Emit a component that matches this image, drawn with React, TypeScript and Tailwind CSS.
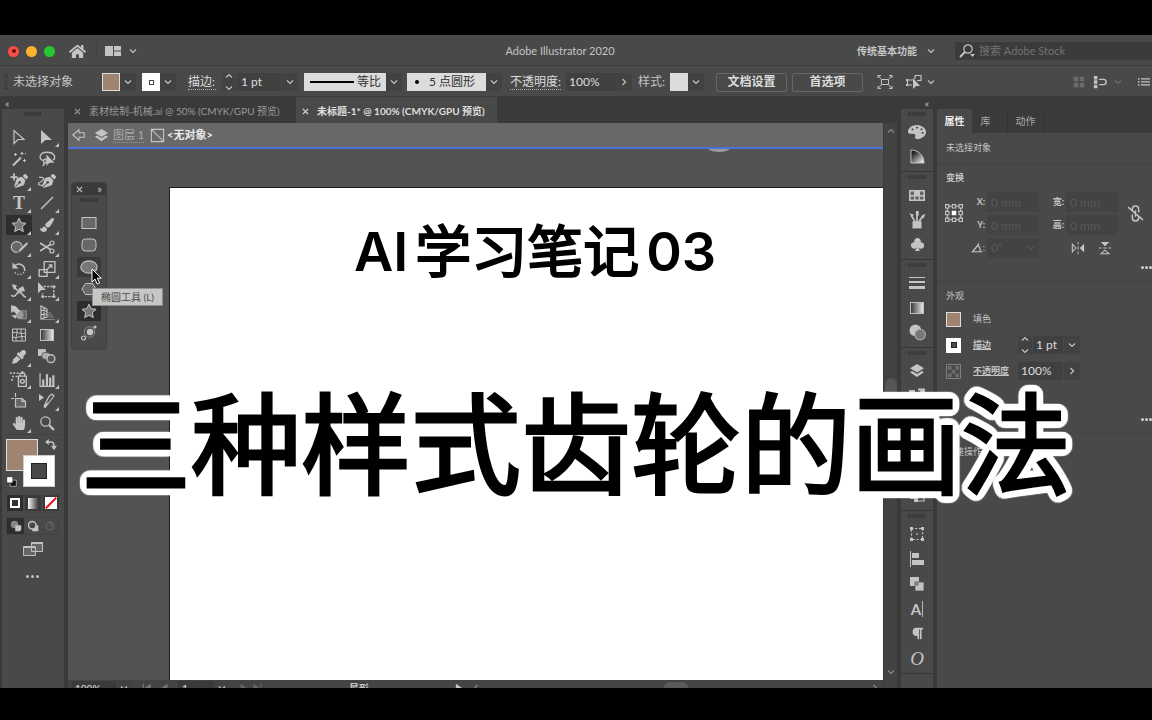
import { useState } from "react";
import type { ReactNode } from "react";
import clsx from "clsx";
import { FaEyeDropper, FaHandPaper, FaHome, FaPaintBrush, FaPalette, FaParagraph, FaPenNib } from "react-icons/fa";
import { BsSuitClubFill } from "react-icons/bs";

const line = { fill: "none", stroke: "currentColor", strokeWidth: 1.2 };
const starPath = "M8 1.2l2.1 4.5 4.9.6-3.6 3.4.9 4.9L8 12.2l-4.3 2.4.9-4.9L1 6.3l4.9-.6z";

type IconProps = { children: ReactNode; className?: string };

const Icon = ({ children, className = "size-4" }: IconProps) => (
  <svg viewBox="0 0 16 16" fill="currentColor" className={clsx("shrink-0", className)} aria-hidden="true">
    {children}
  </svg>
);

const Chevron = ({ className = "size-2" }: { className?: string }) => (
  <Icon className={className}>
    <path d="M2 5l6 6 6-6" fill="none" stroke="currentColor" strokeWidth="2.4" />
  </Icon>
);

const Cross = () => (
  <Icon className="size-[7px]">
    <path d="M2 2l12 12M14 2L2 14" fill="none" stroke="currentColor" strokeWidth="2.6" />
  </Icon>
);

const Gradient = ({ id }: { id: string }) => (
  <>
    <defs>
      <linearGradient id={id}>
        <stop offset="0" stopColor="#333" />
        <stop offset="1" stopColor="#eee" />
      </linearGradient>
    </defs>
    <rect x="1.5" y="2.5" width="13" height="11" fill={`url(#${id})`} stroke="#c0c0c0" />
  </>
);

const Layers = () => (
  <>
    <path d="M8 1l7 4.3-7 4.3-7-4.3z" />
    <path d="M1 9.2l2.2-1.1L8 11l4.8-2.9L15 9.2l-7 4.9z" />
  </>
);

type Tool = { name: string; icon: ReactNode; more?: boolean };

const tools: Tool[] = [
  { name: "选择", icon: <Icon><path d="M3 1.5v13l4-4h6z" {...line} /></Icon> },
  { name: "直接选择", more: true, icon: <Icon><path d="M2 1v14l4.4-4H13z" /></Icon> },
  {
    name: "魔棒",
    icon: (
      <Icon>
        <path d="M2 14.5l8-8" {...line} strokeWidth="2" />
        <path d="M11 1v3M9.5 2.5h3M4.5 2v3M3 3.5h3M13.5 8v3M12 9.5h3M14 3l1-1" {...line} strokeWidth="1" />
      </Icon>
    ),
  },
  {
    name: "套索",
    icon: (
      <Icon className="size-[18px]">
        <path d="M5 9.5C0 8.5 1 2 8 2s8 5 5.5 7M5 9.5c0-2 3-2 2.500.5s-3 2-2.500 0zM5 11.5c1 1.5 0 2.500-1 2.500" {...line} />
        <path d="M7.5 4v10l2.700-2.700h4.300z" />
      </Icon>
    ),
  },
  {
    name: "钢笔",
    more: true,
    icon: (
      <span className="flex items-center">
        <Icon className="size-2 -mt-2 -mr-1"><path d="M8 1v14M1 8h14" {...line} strokeWidth="3.5" /></Icon>
        <FaPenNib className="size-[14px]" />
      </span>
    ),
  },
  {
    name: "曲率",
    icon: (
      <span className="flex items-center">
        <Icon className="h-4 w-2 -mr-1"><path d="M2 0c12 0 11 6 3 10-8 3-4 8 6 6" {...line} strokeWidth="2.5" /></Icon>
        <FaPenNib className="size-[14px]" />
      </span>
    ),
  },
  { name: "文字", more: true, icon: <Icon><text x="8" y="14" textAnchor="middle" fontSize="18" fontWeight="700" fontFamily="Liberation Serif, serif">T</text></Icon> },
  { name: "直线段", more: true, icon: <Icon><path d="M2 14L14 2" {...line} strokeWidth="1.5" /></Icon> },
  { name: "星形", more: true, icon: <Icon><path d={starPath} fill="#777" stroke="currentColor" /></Icon> },
  { name: "画笔", more: true, icon: <FaPaintBrush className="size-[14px]" /> },
  {
    name: "Shaper",
    more: true,
    icon: (
      <Icon className="size-[18px]">
        <circle cx="6" cy="8" r="4.8" fill="#666" stroke="currentColor" />
        <path d="M15.5 3L8.500 9.500 6.500 13l3.500-1.500L16 5.500z" stroke="#494949" strokeWidth=".5" />
      </Icon>
    ),
  },
  {
    name: "剪刀",
    more: true,
    icon: (
      <Icon>
        <circle cx="13" cy="4" r="2" {...line} />
        <circle cx="13" cy="12" r="2" {...line} />
        <path d="M11.5 5.5L1 12M11.5 10.5L1 4" {...line} strokeWidth="1.5" />
      </Icon>
    ),
  },
  {
    name: "旋转",
    more: true,
    icon: (
      <Icon>
        <path d="M4 4.5A5.800 5.800 0 0 1 13.5 10" {...line} strokeWidth="1.5" />
        <path d="M13 11a5.800 5.800 0 0 1-10-1" {...line} strokeDasharray="1.5 1.5" />
        <path d="M1.500 1.500v6h6z" />
      </Icon>
    ),
  },
  {
    name: "比例缩放",
    more: true,
    icon: <Icon className="size-[18px]"><path d="M5.5 1.5h9.500v9.500H5.500zM1 8.5h7v6H1zM8 8.5l4-4M9.5 4.300h2.700V7" {...line} /></Icon>,
  },
  {
    name: "宽度",
    more: true,
    icon: (
      <Icon>
        <path d="M0 12c4 4 5-2 8-3s3 5 7 5M2 3l7 7" {...line} strokeWidth="1.5" />
        <path d="M1 1l5 1.5L4.5 5 3 7zM7 6l5-3 2 5-5 1z" />
      </Icon>
    ),
  },
  {
    name: "自由变换",
    more: true,
    icon: (
      <Icon className="size-[18px]">
        <path d="M5 4h9v9H4v-3" {...line} strokeDasharray="2 1" />
        <path d="M0 0v10l3-3h4zM13 3h2.500v2H13zM13 12h2.500v2H13zM3 12h2.500v2H3z" />
      </Icon>
    ),
  },
  {
    name: "形状生成器",
    more: true,
    icon: (
      <Icon className="size-[18px]">
        <path d="M8.500 6h6v7h-7" fill="#666" stroke="#888" />
        <circle cx="8.500" cy="9.500" r="3.500" fill="#999" />
        <path d="M1 1v7l2-1.500L6 9l3-3-4-4zM1 10h5l-1 3z" />
      </Icon>
    ),
  },
  {
    name: "透视网格",
    more: true,
    icon: (
      <Icon>
        <path d="M2 1v13l6-2V4zM2 5l6 1.5M2 9.5l6-.5M5 2.500V13" {...line} />
        <path d="M8 12h7M8 10h5.500M8 8h4M2 14.500h14" {...line} stroke="#888" />
      </Icon>
    ),
  },
  {
    name: "网格",
    icon: <Icon><path d="M1.5 2h13v12h-13zM1.5 6c4-2 8 2 13 0M1.5 10c4 2 8-2 13 0M5.5 2c2 4-2 8 0 12M10.500 2c-2 4 2 8 0 12" {...line} strokeWidth="1" /></Icon>,
  },
  { name: "渐变", icon: <Icon><Gradient id="tool-gradient" /></Icon> },
  { name: "吸管", more: true, icon: <FaEyeDropper className="size-[14px]" /> },
  {
    name: "混合",
    icon: (
      <Icon className="size-[18px]">
        <path d="M0 1h7v6H0z" />
        <rect x="3.5" y="4" width="7" height="6" rx="2" fill="#aaa" stroke="#494949" strokeWidth=".6" />
        <circle cx="11.5" cy="9.500" r="3.500" fill="#555" stroke="currentColor" strokeWidth="1.2" />
      </Icon>
    ),
  },
  {
    name: "符号喷枪",
    more: true,
    icon: (
      <Icon className="size-[18px]">
        <path d="M7.5 5.5h7v9h-7zM9 3h4v2.500H9z" {...line} />
        <circle cx="11" cy="10" r="1.7" {...line} />
        <path d="M10 1h2v2h-2zM0 2h1.500v1.500H0zM3 2h1.500v1.500H3zM6 2h1.500v1.500H6zM2 5h1.500v1.500H2zM5 5h1.500v1.500H5zM1 8h1.500v1.500H1z" />
      </Icon>
    ),
  },
  { name: "柱形图", more: true, icon: <Icon className="size-[17px]"><path d="M1 2v12.500h14" {...line} /><path d="M3 8h2v6H3zM6.5 3h2v11h-2zM9.5 6h2v8h-2zM12.5 4h2v10h-2z" /></Icon> },
  { name: "画板", icon: <Icon><path d="M4.5 5.5H11l3.500 3V14h-10z" fill="#666" stroke="currentColor" strokeWidth="1.2" /><path d="M4.5 0v4M0 5.5h3M11 5.5v3h3.500" {...line} /></Icon> },
  { name: "切片", more: true, icon: <Icon><path d="M15 3L6 14.500l-1-1 5-10L13 1zM5 14l4-4" {...line} /><path d="M0 1v7l5-3.500z" /></Icon> },
  { name: "抓手", more: true, icon: <FaHandPaper className="size-[14px]" /> },
  { name: "缩放", icon: <Icon><circle cx="6.5" cy="6.5" r="4.7" {...line} /><path d="M10 10l5 5" {...line} strokeWidth="2.2" /></Icon> },
];

const shapeTools: Tool[] = [
  { name: "矩形工具", icon: <Icon><rect x="1" y="2.5" width="14" height="11" fill="#686868" stroke="currentColor" /></Icon> },
  { name: "圆角矩形工具", icon: <Icon><rect x="1" y="2" width="14" height="12" rx="3.5" fill="#686868" stroke="currentColor" /></Icon> },
  { name: "椭圆工具", icon: <Icon className="size-[18px]"><ellipse cx="8" cy="8" rx="7.3" ry="5.5" fill="#777" stroke="currentColor" /></Icon> },
  { name: "多边形工具", icon: <Icon><path d="M4.5 2.500h7L15 8l-3.500 5.500h-7L1 8z" fill="#686868" stroke="currentColor" /></Icon> },
  { name: "星形工具", icon: <Icon><path d={starPath} fill="#777" stroke="currentColor" /></Icon> },
  {
    name: "光晕工具",
    icon: (
      <Icon>
        <circle cx="8.5" cy="7" r="5.3" {...line} strokeWidth="1" stroke="#888" />
        <circle cx="9" cy="7" r="3.3" />
        <circle cx="2.5" cy="13" r="2" {...line} />
        <circle cx="14" cy="2" r="1.5" />
      </Icon>
    ),
  },
];

const dockGroups: Tool[][] = [
  [
    {
      name: "颜色",
      icon: <FaPalette className="h-[14px] w-[18px] -scale-x-100" preserveAspectRatio="none" />,
    },
    {
      name: "颜色参考",
      icon: (
        <Icon className="size-[15px]">
          <defs>
            <linearGradient id="guide" x1="0" y1="0" x2="1" y2="1">
              <stop offset=".2" stopColor="#222" />
              <stop offset="1" stopColor="#fff" />
            </linearGradient>
          </defs>
          <path d="M1 1c8 0 14 6 14 14H1z" fill="url(#guide)" stroke="currentColor" />
        </Icon>
      ),
    },
  ],
  [
    {
      name: "色板",
      icon: (
        <Icon>
          <path d="M0 3h16v11H0z" />
          <path d="M1.5 4.500h3.500v3.500H1.500zM11 4.500h3.500v3.500H11zM1.500 9.500h3.500v3H1.500zM6.300 9.500h3.500v3H6.300zM11 9.500h3.500v3H11z" fill="#666" />
        </Icon>
      ),
    },
    {
      name: "画笔",
      icon: (
        <Icon className="size-[18px]">
          <path d="M4 9h8v6.500H4z" />
          <path d="M6 9L3 4M8 9V3M10 9l3-4" {...line} strokeWidth="1.5" />
          <path d="M1 2l4 1-1 3zM7 0h2.500v4H7zM15.500 2.500L14 6.500l-2.500-2z" />
        </Icon>
      ),
    },
    { name: "符号", icon: <BsSuitClubFill className="size-[15px]" /> },
  ],
  [
    { name: "描边", icon: <Icon><path d="M0 2h16v1H0zM0 6h16v2H0zM0 11h16v3H0z" /></Icon> },
    { name: "渐变", icon: <Icon><Gradient id="dock-gradient" /></Icon> },
    {
      name: "透明度",
      icon: (
        <Icon className="size-[17px]">
          <circle cx="6" cy="6" r="5.5" />
          <circle cx="10.5" cy="10" r="5" fill="#777" stroke="#aaa" />
        </Icon>
      ),
    },
  ],
  [
    { name: "图层", icon: <Icon><Layers /></Icon> },
    { name: "资源导出", icon: <Icon><path d="M6 3H1v11h11V9M6 9l8-7M9 1.500h6v6" {...line} strokeWidth="1.8" /></Icon> },
    { name: "画板", icon: <Icon><path d="M3 3h10v10H3z" {...line} /></Icon> },
    { name: "外观", icon: <Icon><circle cx="8" cy="8" r="5" {...line} /></Icon> },
    { name: "图形样式", icon: <Icon><path d="M2 2h9v9H2z" {...line} /></Icon> },
    { name: "链接", icon: <Icon><path d="M7 4h8v9H7z" {...line} /><path d="M1 7h8v7H5V11H1z" /></Icon> },
  ],
  [
    { name: "变换", icon: <Icon><path d="M2.5 2.500h11v11h-11z" {...line} strokeDasharray="2 1.7" /><path d="M1 1h3v3H1zM12 1h3v3h-3zM1 12h3v3H1zM12 12h3v3h-3zM7.300 7.300h1.500v1.500H7.300z" /></Icon> },
    { name: "对齐", icon: <Icon><path d="M1 0h1v16H1zM3 2h7v5H3zM3 9h12v5H3z" /></Icon> },
    { name: "路径查找器", icon: <Icon><path d="M1 1h9v9H1z" /><path d="M6 6h9v9H6z" stroke="#494949" strokeWidth=".8" /><path d="M6.500 6.500h3v3h-3z" fill="#777" /></Icon> },
    { name: "字符", icon: <span className="border-r border-[#b9b9b9] pr-px text-[15px] leading-4 font-bold">A</span> },
    { name: "段落", icon: <FaParagraph className="size-[13px]" /> },
    { name: "OpenType", icon: <span className="font-['Liberation_Serif',serif] text-[19px] leading-5 italic">O</span> },
  ],
];

const Grip = () => <div className="h-1 w-[18px] bg-[repeating-linear-gradient(90deg,#363636_0_1px,#444_1px_2px)]" />;

const Spinner = () => (
  <button aria-label="微调" className="flex w-[14px] flex-col items-center justify-center gap-1 bg-[#424242]">
    <Chevron className="size-2 rotate-180" />
    <Chevron />
  </button>
);

const DropButton = ({ label, turn }: { label: string; turn?: boolean }) => (
  <button aria-label={label} className="flex h-[18px] w-4 items-center justify-center bg-[#424242]">
    <Chevron className={turn ? "size-2 -rotate-90" : "size-2"} />
  </button>
);

const Dots = () => (
  <button aria-label="更多选项" className="flex gap-px">
    <i className="size-[3px] rounded-full bg-[#cfcfcf]" />
    <i className="size-[3px] rounded-full bg-[#cfcfcf]" />
    <i className="size-[3px] rounded-full bg-[#cfcfcf]" />
  </button>
);

const TitleBar = () => (
  <header className="flex h-[31px] shrink-0 items-center border-b border-[#3c3c3c] pt-[2px]">
    <div className="flex flex-1 items-center pl-2">
      <div className="flex gap-[7px]">
        <button aria-label="关闭" className="flex size-[11px] items-center justify-center rounded-full bg-[#fb4e49]">
          <i className="size-1 rounded-full bg-[#6d0c0a]" />
        </button>
        <button aria-label="最小化" className="size-[11px] rounded-full bg-[#fdb428]" />
        <button aria-label="缩放窗口" className="size-[11px] rounded-full bg-[#28c632]" />
      </div>
      <button aria-label="主页" className="ml-[14px]"><FaHome className="size-[17px]" /></button>
      <button aria-label="排列文档" className="ml-[10px] flex items-center gap-2 border-l border-[#414141] pl-2">
        <Icon><path d="M0 3h8v10H0zM9 3h7v4.500H9zM9 8.500h7V13H9z" /></Icon>
        <Chevron />
      </button>
    </div>
    <h1 className="mr-10 text-[11px]">Adobe Illustrator 2020</h1>
    <div className="flex flex-1 items-center justify-end">
      <button className="flex items-center gap-[10px] text-[10px] font-bold">
        传统基本功能
        <Chevron />
      </button>
      <div className="ml-5 flex h-[18px] w-[197px] items-center bg-[#3b3b3b] pl-1">
        <Icon><circle cx="9" cy="6" r="4.2" {...line} /><path d="M6 9l-5 5" {...line} strokeWidth="2" /><path d="M11 11h5l-2.500 3z" /></Icon>
        <input aria-label="搜索 Adobe Stock" placeholder="搜索 Adobe Stock" className="ml-1 w-full bg-transparent text-[11px] outline-none placeholder:text-[#737373]" />
      </div>
    </div>
  </header>
);

const ControlBar = () => {
  const [weight, setWeight] = useState("1 pt");
  const [opacity, setOpacity] = useState("100%");

  return (
    <div className="flex h-[31px] shrink-0 items-center border-b border-[#3c3c3c] pt-[2px] text-[12px]">
      <div className="ml-1 h-4 w-1 bg-[repeating-linear-gradient(#3c3c3c_0_1px,#494949_1px_2px)]" />
      <span className="ml-[5px] w-[60px] whitespace-nowrap">未选择对象</span>
      <div className="ml-[29px] flex">
        <button aria-label="填色" className="size-[18px] border border-[#ddd] bg-[#a08370]" />
        <DropButton label="填色选项" />
      </div>
      <div className="ml-[6px] flex">
        <button aria-label="描边颜色" className="flex size-[18px] items-center justify-center bg-white">
          <i className="size-[5px] border border-[#444]" />
        </button>
        <DropButton label="描边颜色选项" />
      </div>
      <label htmlFor="weight" className="ml-3 w-[28px] border-b border-dotted border-[#aaa] leading-[15px] whitespace-nowrap text-[#dcdcdc]">描边:</label>
      <div className="ml-[6px] flex h-[18px] gap-px">
        <Spinner />
        <input id="weight" value={weight} onChange={(e) => setWeight(e.target.value)} className="w-11 bg-[#404040] pl-1 text-[#dcdcdc] outline-none" />
        <DropButton label="描边粗细选项" />
      </div>
      <div className="relative ml-[6px] flex">
        <svg viewBox="0 0 44 2" className="absolute top-2 left-[6px] h-[2px] w-11" aria-hidden="true">
          <rect width="44" height="2" />
        </svg>
        <select aria-label="宽度配置文件" className="h-[18px] w-[82px] appearance-none bg-[#dcdcdc] pl-[53px] text-[#333]">
          <option>等比</option>
        </select>
        <DropButton label="宽度配置选项" />
      </div>
      <div className="relative ml-[5px] flex">
        <i className="absolute top-[7px] left-2 size-1 rounded-full bg-black" />
        <select aria-label="画笔定义" className="h-[18px] w-[79px] appearance-none bg-[#dcdcdc] pl-[22px] text-[#333]">
          <option>5 点圆形</option>
        </select>
        <DropButton label="画笔定义选项" />
      </div>
      <label htmlFor="opacity" className="ml-2 w-[51px] border-b border-dotted border-[#aaa] leading-[15px] whitespace-nowrap text-[#dcdcdc]">不透明度:</label>
      <div className="ml-[5px] flex">
        <input id="opacity" value={opacity} onChange={(e) => setOpacity(e.target.value)} className="h-[18px] w-[50px] bg-[#404040] pl-[3px] text-[#dcdcdc] outline-none" />
        <DropButton label="不透明度选项" turn />
      </div>
      <span className="ml-[6px] w-[27px] whitespace-nowrap">样式:</span>
      <div className="ml-[5px] flex">
        <button aria-label="图形样式" className="size-[18px] bg-[#dcdcdc]" />
        <DropButton label="图形样式选项" />
      </div>
      <button className="ml-3 h-[19px] w-[71px] rounded-xs border border-[#666] leading-4 font-bold text-[#dcdcdc]">文档设置</button>
      <button className="ml-[5px] h-[19px] w-[71px] rounded-xs border border-[#666] leading-4 font-bold text-[#dcdcdc]">首选项</button>
      <button aria-label="隔离选中的对象" className="ml-[14px]">
        <Icon><path d="M4.500 5.500h7v5h-7zM1 4V1.500h3M12 1.500h3V4M15 12v2.500h-3M4 14.500H1V12M1 1.500l3.500 4M15 1.500l-3.500 4M1 14.500l3.500-4M15 14.500l-3.500-4" {...line} strokeWidth="1" /></Icon>
      </button>
      <button aria-label="选择类似的对象" className="ml-[13px] flex items-center gap-[5px]">
        <Icon><path d="M7 6H1.500v5H6M9 1.500h6v5h-4M9 1.500V5" {...line} /><path d="M7 4v11l3-3h4zM0 5h2v2H0zM0 10h2v2H0z" /></Icon>
        <Chevron />
      </button>
      <div className="ml-auto flex items-center gap-[8px] pr-[2px]">
        <Icon className="size-3 text-[#6b6b6b]"><path d="M1 1h6v6H1zM9 1h6v6H9zM1 9h6v6H1zM9 9h6v6H9z" /></Icon>
        <button aria-label="对齐像素" className="flex items-center gap-[7px]">
          <Icon className="size-[14px]"><path d="M1 1h4v4H1zM1 6h4v4H1zM1 11h4v4H1z" /><path d="M7 5h5a3 3 0 0 1 0 6H7" {...line} strokeWidth="1.6" /></Icon>
          <Chevron className="size-2 text-[#6b6b6b]" />
        </button>
        <button aria-label="控制面板菜单" className="ml-2">
          <Icon className="size-3"><path d="M0 3h2v2H0zM4 3h12v1.500H4zM0 7h2v2H0zM4 7h12v1.500H4zM0 11h2v2H0zM4 11h12v1.500H4z" /></Icon>
        </button>
      </div>
    </div>
  );
};

const Toolbar = () => {
  const [active, setActive] = useState("星形");

  return (
    <aside className="w-[68px] shrink-0 border-r-4 border-l-2 border-r-[#3a3a3a] border-l-[#3a3a3a]">
      <div className="h-3 bg-[#3a3a3a] pl-[3px] text-[10px] leading-3">«</div>
      <div className="flex h-[17px] justify-center pt-[3px]"><Grip /></div>
      <div className="ml-[3px] grid w-14 grid-cols-2">
        {tools.map((tool) => (
          <button
            key={tool.name}
            aria-label={tool.name}
            onClick={() => setActive(tool.name)}
            className={clsx("relative flex h-[22px] items-center justify-center rounded-xs border border-[#494949]", active === tool.name && "bg-[#2e2e2e]")}
          >
            {tool.icon}
            {tool.more && (
              <svg viewBox="0 0 4 4" fill="currentColor" className="absolute right-px bottom-0 size-[4px]" aria-hidden="true">
                <path d="M4 0v4H0z" />
              </svg>
            )}
          </button>
        ))}
      </div>
      {/* Fill and stroke */}
      <div className="ml-1 border-t border-[#424242] pt-[4px]">
        <div className="relative h-[50px]">
          <button aria-label="填色" className="absolute top-0 left-0 size-8 border border-[#ddd] bg-[#a08370]" />
          <button aria-label="描边" className="absolute top-4 left-[17px] flex size-8 items-center justify-center border border-[#ccc] bg-white">
            <i className="size-4 border border-[#222] bg-[#494949]" />
          </button>
          <button aria-label="互换填色和描边" className="absolute top-0 left-[39px]">
            <Icon className="size-3"><path d="M4 4h4c3 0 4 2 4 5" {...line} strokeWidth="2" /><path d="M5 0v8L0 4zM8 9h8l-4 6z" /></Icon>
          </button>
          <button aria-label="默认填色和描边" className="absolute top-[37px] left-0">
            <Icon className="size-[11px]"><path d="M6 6h9v9H6z" fill="#111" stroke="#ccc" /><path d="M1 1h9v9H1z" fill="#fff" stroke="#222" /></Icon>
          </button>
        </div>
        <div className="mt-[6px] flex w-[54px] justify-around">
          <button aria-label="颜色" className="flex size-4 items-center justify-center bg-[#2e2e2e]"><i className="size-[10px] border-2 border-white bg-[#333]" /></button>
          <button aria-label="渐变" className="flex size-4 items-center justify-center bg-[#3a3a3a]"><i className="size-[11px] bg-linear-to-r from-white to-[#333]" /></button>
          <button aria-label="无" className="flex size-4 items-center justify-center bg-[#3a3a3a]">
            <Icon className="size-3"><path d="M0 0h16v16H0z" fill="#fff" /><path d="M1 15L15 1" stroke="#e5141b" strokeWidth="2.5" /></Icon>
          </button>
        </div>
        <div className="mt-[6px] grid w-[53px] grid-cols-3 border border-[#424242]">
          <button aria-label="正常绘图" className="flex h-4 items-center justify-center bg-[#2e2e2e]">
            <Icon className="size-3"><circle cx="6" cy="6" r="5" fill="#888" /><path d="M7 7h8v6l-2 2H7z" /></Icon>
          </button>
          <button aria-label="背面绘图" className="flex h-4 items-center justify-center">
            <Icon className="size-3"><path d="M7 7h8v8H7z" /><circle cx="7" cy="7" r="5" fill="#494949" stroke="currentColor" strokeWidth="1.8" /></Icon>
          </button>
          <button aria-label="内部绘图" className="flex h-4 items-center justify-center text-[#616161]">
            <Icon className="size-3"><circle cx="8" cy="8" r="5" {...line} strokeWidth="1.8" /><path d="M8 4v4h4z" /></Icon>
          </button>
        </div>
        <button aria-label="更改屏幕模式" className="mt-[6px] ml-4 block">
          <svg viewBox="0 0 22 16" className="h-4 w-[22px]" fill="#666" stroke="#c0c0c0" aria-hidden="true">
            <path d="M1.5 5.500h12v9h-12zM1.500 6.500h12M9.500 1.500h11v9h-11z" />
            <path d="M9 2h12" strokeWidth="2" />
          </svg>
        </button>
        <button aria-label="编辑工具栏" className="mt-[18px] ml-5 flex gap-[2px]">
          <i className="size-[3px] rounded-full bg-[#c0c0c0]" />
          <i className="size-[3px] rounded-full bg-[#c0c0c0]" />
          <i className="size-[3px] rounded-full bg-[#c0c0c0]" />
        </button>
      </div>
    </aside>
  );
};

const ShapePanel = () => (
  <div className="absolute top-[33px] left-[3px] w-9 rounded-sm border border-[#404040] bg-[#494949] pb-1 shadow">
    <div className="flex h-3 items-center justify-between rounded-t-sm bg-[#3a3a3a] px-1 text-[11px] leading-3">
      <button aria-label="关闭工具组"><Cross /></button>
      <button aria-label="展开工具组">»</button>
    </div>
    <div className="flex h-[17px] justify-center pt-[3px]"><Grip /></div>
    {shapeTools.map((tool) => (
      <button
        key={tool.name}
        aria-label={tool.name}
        className={clsx(
          "mx-auto flex h-[22px] w-[26px] items-center justify-center rounded-xs border border-[#494949]",
          tool.name === "椭圆工具" && "bg-[#3a3a3a]",
          tool.name === "星形工具" && "bg-[#2e2e2e]"
        )}
      >
        {tool.icon}
      </button>
    ))}
    <div role="tooltip" className="absolute top-[105px] left-5 h-[18px] w-[71px] border border-[#8d8d8d] bg-[#c6c6c6] text-center text-[10px] leading-4 whitespace-nowrap text-[#4a4a4a]">
      椭圆工具 (L)
    </div>
    <svg viewBox="0 0 11 17" className="absolute top-[85px] left-[19px] h-[17px] w-[11px]" aria-hidden="true">
      <path d="M1 1v13l3-3 2.200 5 2.300-1-2.200-4.800h4z" fill="#000" stroke="#fff" />
    </svg>
  </div>
);

const Document = () => (
  <main className="flex min-w-0 flex-1 flex-col bg-[#3a3a3a]">
    <nav className="flex h-[26px] shrink-0 text-[10px]">
      <button className="flex w-[228px] items-center gap-[8px] pt-[2px] pl-[6px] whitespace-nowrap text-[#999]">
        <Cross />
        素材绘制-机械.ai @ 50% (CMYK/GPU 预览)
      </button>
      <button className="flex w-[201px] items-center gap-[8px] bg-[#494949] pt-[2px] pl-[6px] font-bold whitespace-nowrap text-[#dedede]">
        <Cross />
        未标题-1* @ 100% (CMYK/GPU 预览)
      </button>
    </nav>
    <div className="flex min-h-0 flex-1">
      <div className="flex min-w-0 flex-1 flex-col">
        <div className="flex h-[26px] shrink-0 items-center border-b-2 border-[#4c72d8] bg-[#686868] pl-1 text-[12px]">
          <Icon className="size-[14px]"><path d="M1 8l7-6v3.500h6v5H8V14z" {...line} /></Icon>
          <Icon className="ml-2 size-[15px]"><Layers /></Icon>
          <a href="#layer" className="ml-1 w-[31px] border-b border-dotted border-[#999] text-[11px] leading-[15px] whitespace-nowrap text-[#aaa]">图层 1</a>
          <Icon className="ml-[6px] size-[15px]"><path d="M1.500 1.500h13v13h-13zM1.500 1.500l13 13" {...line} /></Icon>
          <span className="ml-[2px] text-[11px] font-bold text-[#e8e8e8]">&lt;无对象&gt;</span>
        </div>
        <div className="relative flex min-h-0 flex-1 overflow-hidden bg-[#535353] pt-[38px] pl-[101px]">
          <svg viewBox="0 0 22 4" className="absolute top-0 left-[640px] h-1 w-[22px]" aria-hidden="true">
            <path d="M0 0c4 4 18 4 22 0z" fill="#999" />
          </svg>
          <div className="flex-1 border-t border-l border-[#1c1c1c] bg-white" />
          <ShapePanel />
        </div>
        {/* Status bar, cut off by the bottom edge */}
        <div className="h-2 shrink-0 overflow-hidden bg-[#444]">
          <div className="flex h-4 items-center pl-1 text-[10px] font-bold">
            <input aria-label="缩放比例" defaultValue="100%" className="w-11 bg-[#3a3a3a] pl-[3px] outline-none" />
            <DropButton label="缩放选项" />
            <Icon className="ml-[10px] size-[10px] text-[#777]"><path d="M1 1h2v14H1zM14 1v14L4 8z" /></Icon>
            <Icon className="ml-[8px] size-[10px] text-[#777]"><path d="M12 1v14L2 8z" /></Icon>
            <input aria-label="画板导航" defaultValue="1" className="ml-2 w-9 bg-[#3a3a3a] pl-1 outline-none" />
            <DropButton label="画板选项" />
            <Icon className="ml-2 size-[10px] text-[#666]"><path d="M4 1v14l10-7z" /></Icon>
            <Icon className="ml-1 size-[10px] text-[#666]"><path d="M2 1v14l10-7zM13 1h2v14h-2z" /></Icon>
            <span className="ml-[87px]">星形</span>
            <Icon className="ml-[85px] size-[10px]"><path d="M3 1v14l10-7z" /></Icon>
            <Chevron className="ml-[8px] size-2 rotate-90 text-[#888]" />
            <div className="mx-auto h-3 w-6 rounded-full bg-[#5a5a5a]" />
            <Chevron className="mr-1 size-2 -rotate-90 text-[#888]" />
          </div>
        </div>
      </div>
      <div className="flex w-[14px] shrink-0 flex-col items-center justify-between border-l border-[#3a3a3a] bg-[#424242] py-1 text-[#888]">
        <Chevron className="size-2 rotate-180" />
        <div className="h-12 w-3 rounded-full bg-[#555]" />
        <Chevron className="mb-2 size-2" />
      </div>
    </div>
  </main>
);

const Dock = () => (
  <aside className="w-[40px] shrink-0 border-r-4 border-l-4 border-[#3a3a3a]">
    <div className="h-3 bg-[#3a3a3a] pr-1 text-right text-[10px] leading-3">«</div>
    {dockGroups.map((group, i) => (
      <div key={i} className="border-b border-[#363636] pb-[2px]">
        <div className="flex h-[10px] justify-center pt-[3px]"><Grip /></div>
        {group.map((item) => (
          <button key={item.name} aria-label={item.name} className="flex h-[25px] w-full items-center justify-center">
            {item.icon}
          </button>
        ))}
      </div>
    ))}
  </aside>
);

const SizeField = ({ id, label }: { id: string; label: string }) => (
  <div className="flex items-center gap-[2px]">
    <label htmlFor={id} className="w-5 text-right font-bold">{label}</label>
    <input id={id} disabled value="0 mm" className="h-5 w-[52px] bg-[#434343] pl-1 text-[12px] text-[#585858]" />
  </div>
);

const Properties = () => (
  <aside className="w-[215px] shrink-0 overflow-hidden text-[9px]">
    <div className="h-3 bg-[#3a3a3a]" />
    <div className="flex h-6 bg-[#3a3a3a] text-[10px] text-[#aaa]">
      <button className="w-[35px] bg-[#494949] font-bold text-[#eee]">属性</button>
      <button className="w-9 border-r border-[#333] pr-2">库</button>
      <button className="w-9 border-r border-[#333]">动作</button>
    </div>
    <div className="flex h-[31px] items-center border-b border-[#424242] pl-[9px]">未选择对象</div>

    {/* Transform */}
    <section className="h-[118px] border-b border-[#424242] pl-2">
      <h2 className="flex h-7 items-center pl-px font-bold">变换</h2>
      <div className="flex items-start">
        <button aria-label="参考点" className="mt-[12px]">
          <Icon className="size-[18px]">
            <path d="M.5.5h3v3h-3zM6.500.5h3v3h-3zM12.500.5h3v3h-3zM.5 6.500h3v3h-3zM12.500 6.500h3v3h-3zM.5 12.500h3v3h-3zM6.500 12.500h3v3h-3zM12.500 12.500h3v3h-3zM3.500 2h3M9.500 2h3M3.500 14h3M9.500 14h3M2 3.500v3M2 9.500v3M14 3.500v3M14 9.500v3" {...line} strokeWidth="1" />
            <path d="M6 6h4v4H6z" fill="#fff" />
          </Icon>
        </button>
        <div className="ml-[2px] grid grid-cols-[auto_auto] gap-x-[5px] gap-y-[3px]">
          <SizeField id="x" label="X:" />
          <SizeField id="w" label="宽:" />
          <SizeField id="y" label="Y:" />
          <SizeField id="h" label="高:" />
          <div className="flex items-center gap-[2px]">
            <label htmlFor="angle" className="flex w-5 items-center justify-end">
              <Icon className="size-3"><path d="M11 2L2 13h13M9 5c3 2 4 4 3 8" {...line} strokeWidth="1.6" /></Icon>:
            </label>
            <div className="flex h-5 w-[52px] items-center bg-[#434343] pr-1 text-[#585858]">
              <select id="angle" disabled className="w-full appearance-none pl-1 text-[12px] opacity-100">
                <option>0°</option>
              </select>
              <Chevron />
            </div>
          </div>
          <div className="flex items-center gap-[13px] pl-[27px]">
            <button aria-label="水平翻转"><Icon className="size-[14px]"><path d="M1.500 3.500v9l4-4.500z" {...line} /><path d="M15 3v10l-5-5zM7.500 1h1v3h-1zM7.500 6h1v4h-1zM7.500 12h1v3h-1z" /></Icon></button>
            <button aria-label="垂直翻转"><Icon className="size-[14px]"><path d="M3.500 14.500h9L8 10.500z" {...line} /><path d="M3 1h10L8 6zM1 7.500h3v1H1zM6 7.500h4v1H6zM12 7.500h3v1h-3z" /></Icon></button>
          </div>
        </div>
        <button aria-label="约束宽度和高度比例" className="mt-[13px] ml-[9px]">
          <Icon className="size-[17px]"><path d="M5 6V4a3 3 0 0 1 6 0v3M5 9v3a3 3 0 0 0 6 0v-2M8 5v6M1 2l14 12" {...line} strokeWidth="1.4" /></Icon>
        </button>
      </div>
      <div className="mt-[8px] flex justify-end"><Dots /></div>
    </section>

    {/* Appearance */}
    <section className="h-[152px] border-b border-[#424242] pl-[9px]">
      <h2 className="flex h-6 items-center pt-1">外观</h2>
      <div className="flex h-[26px] items-center">
        <button aria-label="填色" className="size-[15px] border border-[#ddd] bg-[#a08370]" />
        <span className="ml-3">填色</span>
      </div>
      <div className="flex h-[26px] items-center">
        <button aria-label="描边" className="flex size-[15px] items-center justify-center bg-white"><i className="size-[6px] border border-[#222] bg-[#494949]" /></button>
        <label htmlFor="panel-weight" className="ml-3 w-[45px] font-bold underline">描边</label>
        <div className="flex h-[18px] gap-px">
          <Spinner />
          <input id="panel-weight" defaultValue="1 pt" className="w-[30px] bg-[#404040] pl-[3px] text-[12px] text-[#dcdcdc] outline-none" />
          <DropButton label="描边粗细选项" />
        </div>
      </div>
      <div className="flex h-[26px] items-center">
        <button aria-label="不透明度预览">
          <Icon className="size-[15px]"><path d="M.5.5h15v15H.5z" fill="#484848" stroke="#888" /><path d="M2 2h4v4H2zM10 2h4v4h-4zM6 6h4v4H6zM2 10h4v4H2zM10 10h4v4h-4z" fill="#6c6c6c" /></Icon>
        </button>
        <label htmlFor="panel-opacity" className="ml-3 w-[45px] font-bold whitespace-nowrap underline">不透明度</label>
        <div className="flex h-[18px] gap-px">
          <input id="panel-opacity" defaultValue="100%" className="w-[45px] bg-[#404040] pl-[3px] text-[12px] text-[#dcdcdc] outline-none" />
          <DropButton label="不透明度选项" turn />
        </div>
      </div>
      <div className="mt-[34px] flex justify-end"><Dots /></div>
    </section>
    <h2 className="flex h-9 items-center pl-[9px]">快速操作</h2>
  </aside>
);

const App = () => (
  <div className="relative flex h-screen flex-col overflow-hidden bg-black pt-[35px] pb-8 font-[Lato,'Noto_Sans_CJK_SC',sans-serif] text-[#c4c4c4]">
    <div className="flex min-h-0 flex-1 flex-col bg-[#494949]">
      <TitleBar />
      <ControlBar />
      <div className="flex min-h-0 flex-1 overflow-hidden">
        <Toolbar />
        <Document />
        <Dock />
        <Properties />
      </div>
    </div>

    {/* Cover captions */}
    <p className="pointer-events-none absolute top-[220px] left-[354px] flex items-center gap-[7px] font-[Inter,'Noto_Sans_CJK_SC',sans-serif] text-[54px] leading-[64px] font-semibold whitespace-nowrap text-black">
      <span>AI</span>
      <span className="text-[56px] font-normal [-webkit-text-stroke:2px_#000]">学习笔记</span>
      <span>03</span>
    </p>
    <p className="pointer-events-none absolute inset-x-0 top-[382px] text-center font-['Noto_Sans_CJK_SC',sans-serif] text-[110px] leading-[112px] whitespace-nowrap text-black [-webkit-text-stroke:3px_#000] [text-shadow:8px_0_1px_#fff,8px_2px_1px_#fff,7px_4px_1px_#fff,6px_5px_1px_#fff,5px_6px_1px_#fff,4px_7px_1px_#fff,2px_8px_1px_#fff,0_8px_1px_#fff,-2px_8px_1px_#fff,-4px_7px_1px_#fff,-5px_6px_1px_#fff,-6px_5px_1px_#fff,-7px_4px_1px_#fff,-8px_2px_1px_#fff,-8px_0_1px_#fff,-8px_-2px_1px_#fff,-7px_-4px_1px_#fff,-6px_-5px_1px_#fff,-5px_-6px_1px_#fff,-4px_-7px_1px_#fff,-2px_-8px_1px_#fff,0_-8px_1px_#fff,2px_-8px_1px_#fff,4px_-7px_1px_#fff,5px_-6px_1px_#fff,6px_-5px_1px_#fff,7px_-4px_1px_#fff,8px_-2px_1px_#fff]">
      三种样式齿轮的画法
    </p>
  </div>
);

export default App;
